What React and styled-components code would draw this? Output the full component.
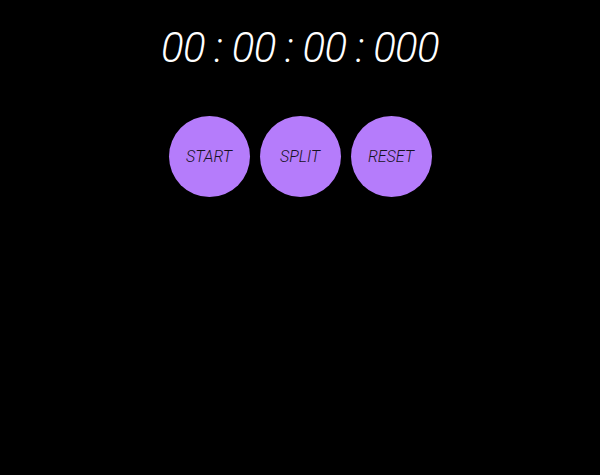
import React from 'react'
import styled, { createGlobalStyle } from 'styled-components'

const GlobalStyle = createGlobalStyle`
  html, body {
    margin: 0;
    padding: 0;
    background: #000;
    height: 100%;
  }
  body {
    font-family: Roboto, "Liberation Sans", sans-serif;
  }
`

const Page = styled.div`
  display: flex;
  flex-direction: column;
  align-items: center;
  padding-top: 22px;
`

const Display = styled.div`
  color: #fff;
  font-size: 42px;
  font-weight: 300;
  font-style: italic;
  line-height: 52px;
  letter-spacing: -0.7px;
  white-space: pre;
`

const Controls = styled.div`
  display: flex;
  gap: 10px;
  margin-top: 42px;
`

const Round = styled.button`
  width: 81px;
  height: 81px;
  border-radius: 50%;
  border: none;
  padding: 0;
  background: #b57cfb;
  color: #161223;
  font-family: Roboto, "Liberation Sans", sans-serif;
  font-size: 16px;
  font-weight: 300;
  font-style: italic;
  cursor: pointer;
`

const App = () => {
  return (
    <>
      <GlobalStyle />
      <Page>
        <Display>00 : 00 : 00 : 000</Display>
        <Controls>
          <Round>START</Round>
          <Round>SPLIT</Round>
          <Round>RESET</Round>
        </Controls>
      </Page>
    </>
  )
}

export default App
